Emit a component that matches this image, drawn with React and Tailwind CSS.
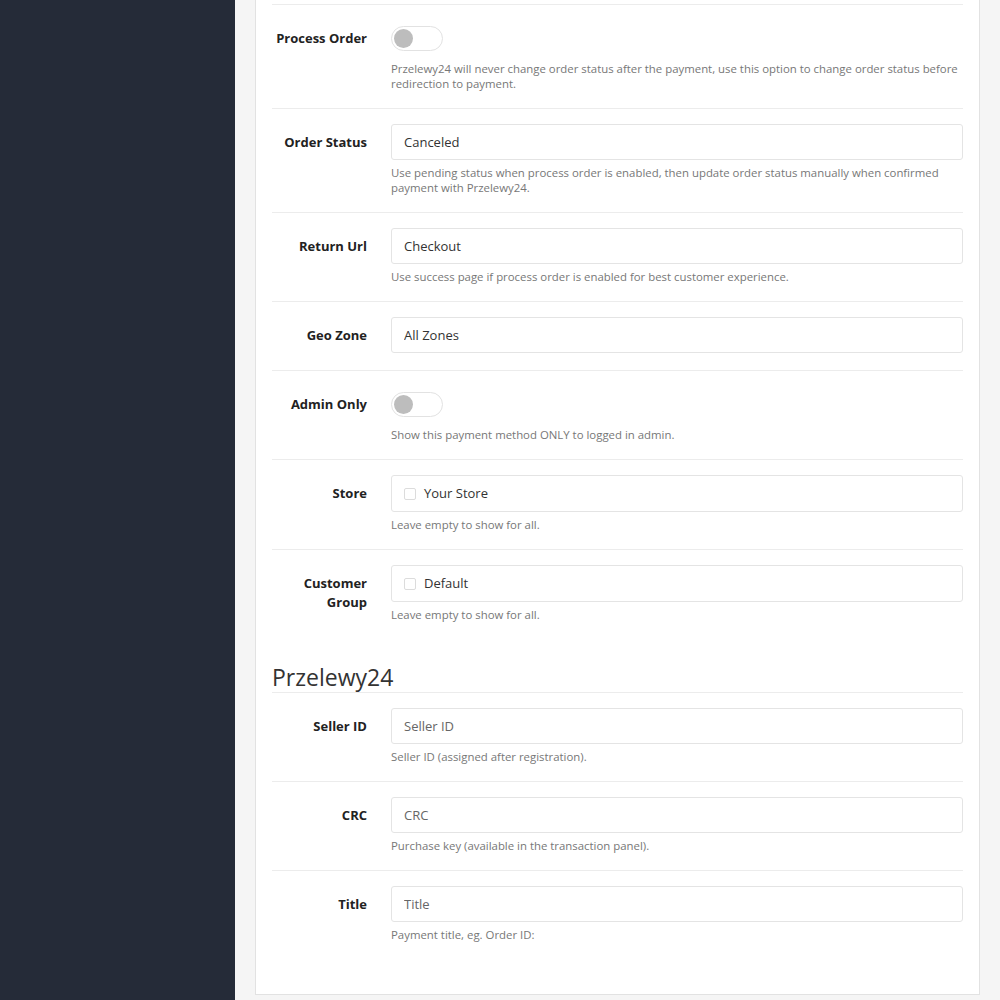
import { useState } from "react";

const font = { fontFamily: '"Open Sans", "Liberation Sans", sans-serif' };

// gray pill switch, off state
const Toggle = ({ on, onChange }) => (
  <div className="h-9 flex items-center">
    <button
      type="button"
      onClick={onChange}
      className="w-[52px] h-[25px] rounded-full border border-[#e2e2e2] bg-white flex items-center px-[2px]"
    >
      <span
        className={
          "w-[19px] h-[19px] rounded-full bg-[#bdbdbd] " +
          (on ? "ml-auto" : "")
        }
      />
    </button>
  </div>
);

const Input = ({ value, placeholder }) => (
  <input
    type="text"
    defaultValue={value}
    placeholder={placeholder}
    className="w-full h-9 border border-[#e4e4e4] rounded-[3px] px-3 text-[13px] text-[#333] placeholder:text-[#666] outline-none bg-white"
  />
);

const CheckBox = ({ label }) => (
  <div className="w-full h-[37px] border border-[#e4e4e4] rounded-[3px] px-3 flex items-center gap-2 text-[13px] text-[#333]">
    <span className="w-3 h-3 border border-[#dcdcdc] rounded-[2px] bg-white" />
    <span>{label}</span>
  </div>
);

const Row = ({ label, help, last, children }) => (
  <div
    className={
      "grid grid-cols-[95px_1fr] gap-x-6 pt-[15px] pb-[17px] " +
      (last ? "" : "border-b border-[#ececec]")
    }
  >
    <label className="text-right font-bold text-[13px] leading-[19px] pt-[9px] text-[#222]">
      {label}
    </label>
    <div>
      {children}
      {help && (
        <p className="mt-[5px] text-[11.4px] leading-[15px] text-[#777]">{help}</p>
      )}
    </div>
  </div>
);

export default function App() {
  const [processOrder, setProcessOrder] = useState(false);
  const [adminOnly, setAdminOnly] = useState(false);

  return (
    <div className="flex min-h-screen" style={font}>
      <aside className="w-[235px] shrink-0 bg-[#252b38]" />
      <main className="flex-1 bg-[#f5f5f5] px-5 pb-[5px]">
        <div className="bg-white border border-t-0 border-[#e2e2e2] px-4 pb-[35px]">
          <div className="h-[5px] border-b border-[#ececec]" />

          <Row
            label="Process Order"
            help="Przelewy24 will never change order status after the payment, use this option to change order status before redirection to payment."
          >
            <Toggle on={processOrder} onChange={() => setProcessOrder(!processOrder)} />
          </Row>
          <Row
            label="Order Status"
            help="Use pending status when process order is enabled, then update order status manually when confirmed payment with Przelewy24."
          >
            <Input value="Canceled" />
          </Row>
          <Row
            label="Return Url"
            help="Use success page if process order is enabled for best customer experience."
          >
            <Input value="Checkout" />
          </Row>
          <Row label="Geo Zone">
            <Input value="All Zones" />
          </Row>
          <Row label="Admin Only" help="Show this payment method ONLY to logged in admin.">
            <Toggle on={adminOnly} onChange={() => setAdminOnly(!adminOnly)} />
          </Row>
          <Row label="Store" help="Leave empty to show for all.">
            <CheckBox label="Your Store" />
          </Row>
          <Row label="Customer Group" help="Leave empty to show for all." last>
            <CheckBox label="Default" />
          </Row>

          <h3 className="mt-[23px] text-[23px] leading-[30px] text-[#333] border-b border-[#ececec]">
            Przelewy24
          </h3>

          <Row label="Seller ID" help="Seller ID (assigned after registration).">
            <Input placeholder="Seller ID" />
          </Row>
          <Row label="CRC" help="Purchase key (available in the transaction panel).">
            <Input placeholder="CRC" />
          </Row>
          <Row label="Title" help="Payment title, eg. Order ID:" last>
            <Input placeholder="Title" />
          </Row>
        </div>
      </main>
    </div>
  );
}
